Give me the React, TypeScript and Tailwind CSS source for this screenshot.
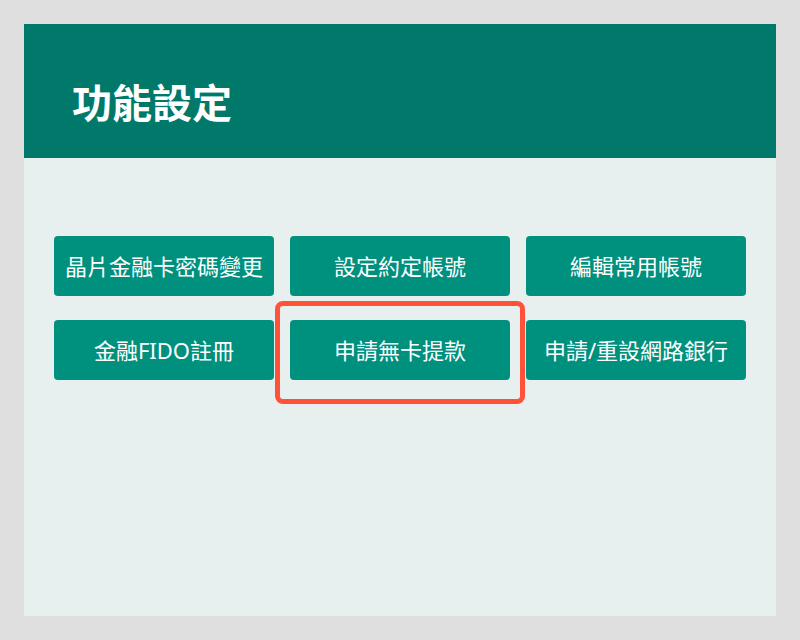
import React from "react";

const actions = [
  "晶片金融卡密碼變更",
  "設定約定帳號",
  "編輯常用帳號",
  "金融FIDO註冊",
  "申請無卡提款",
  "申請/重設網路銀行",
];

const ActionButton = ({ label, marked }: { label: string; marked?: boolean }) => (
  <div className="relative">
    <button className="w-full h-[60px] rounded-[4px] bg-[#00907e] text-white text-[22px] font-normal leading-none flex items-center justify-center whitespace-nowrap">
      {label}
    </button>
    {marked && (
      <span className="absolute left-[-15px] right-[-15px] top-[-19px] bottom-[-24px] rounded-[8px] border-[5px] border-[#ff5238] pointer-events-none" />
    )}
  </div>
);

export default function App() {
  return (
    <div
      className="w-[800px] h-[640px] bg-[#dfdfdf] p-6"
      style={{ fontFamily: '"Noto Sans", "Noto Sans CJK TC", sans-serif' }}
    >
      <div className="h-[592px] bg-[#e7f0ee] flex flex-col">
        <div className="h-[134px] bg-[#00796b] pl-12 pt-[50px]">
          <h1 className="text-[40px] font-bold text-white leading-[58px]">功能設定</h1>
        </div>
        <div className="px-[30px] pt-[78px] grid grid-cols-3 gap-x-4 gap-y-6">
          {actions.map((a) => (
            <ActionButton key={a} label={a} marked={a === "申請無卡提款"} />
          ))}
        </div>
      </div>
    </div>
  );
}
